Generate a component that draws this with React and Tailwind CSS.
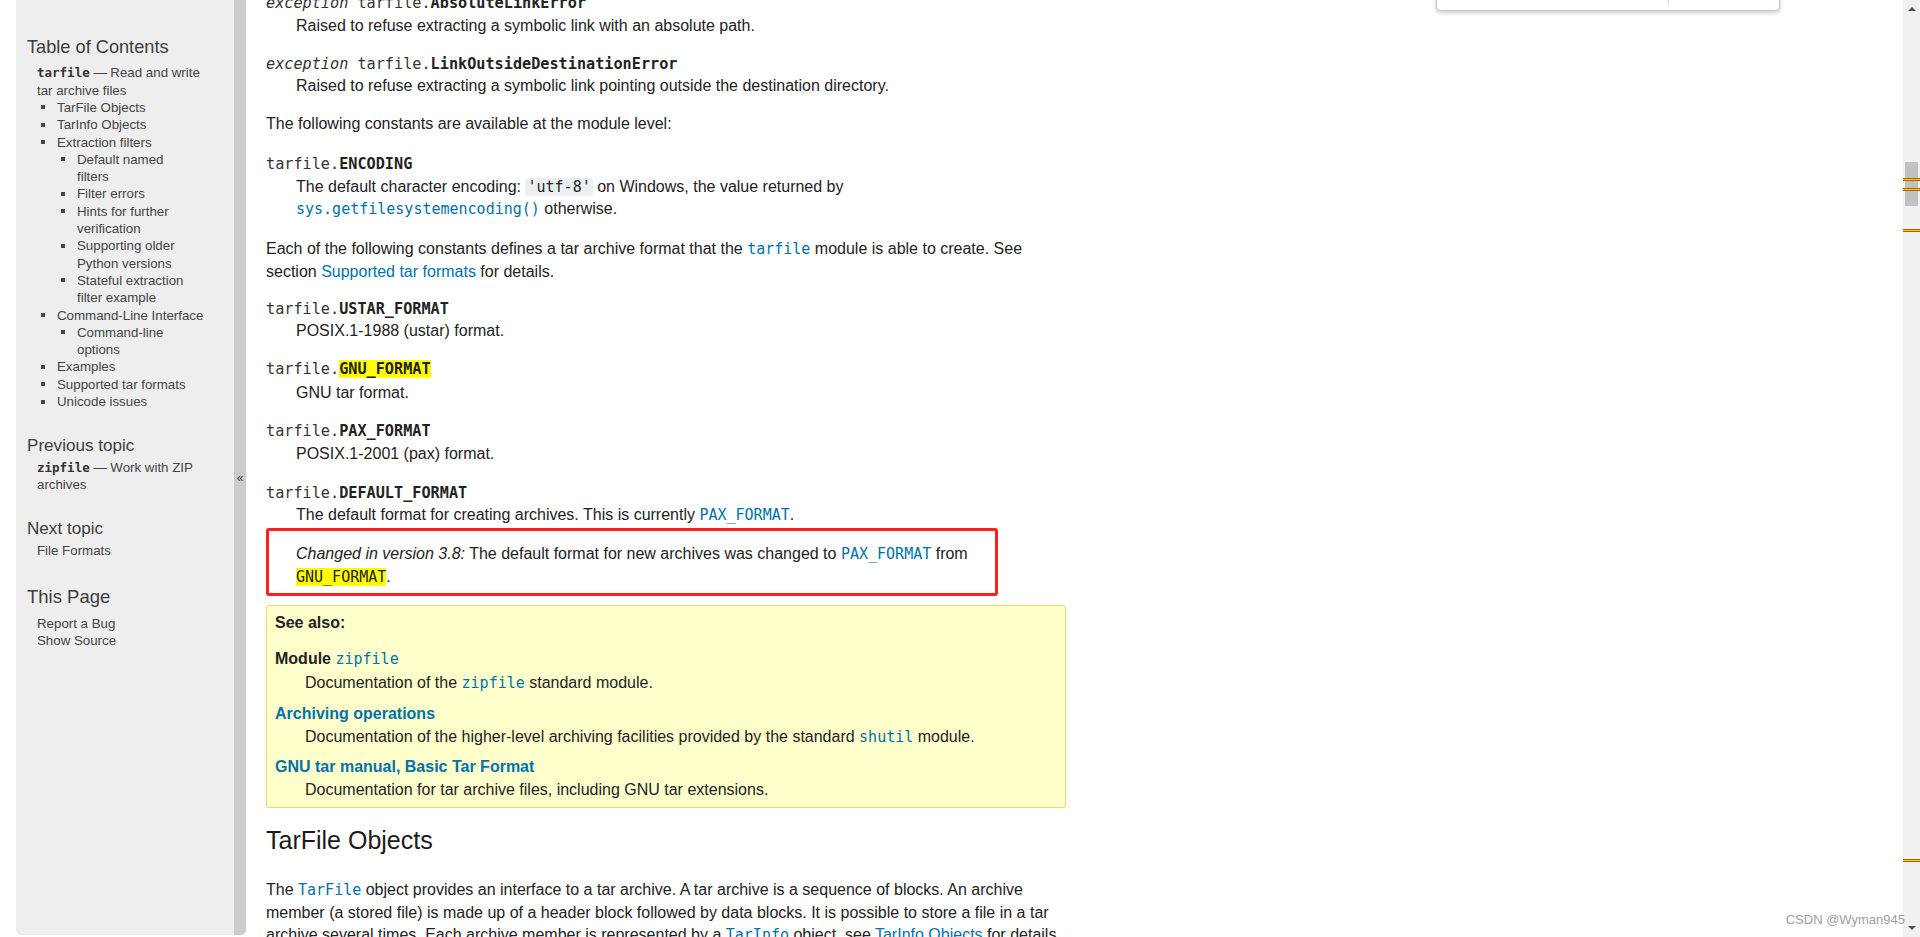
const mono = "font-['DejaVu_Sans_Mono',monospace]";

function Code({ children, link, hl, bg }) {
  return (
    <code
      className={`${mono} text-[15px] ${link ? "text-[#0072aa]" : "text-[#222]"} ${
        hl ? "bg-[#ffff00] text-[#222]" : ""
      } ${bg ? "bg-[#ecf0f3] rounded-[3px] px-[2px]" : ""}`}
    >
      {children}
    </code>
  );
}

function Sig({ exc, name, hl, className = "" }) {
  return (
    <div className={`${mono} text-[15.2px] leading-[22.5px] ${className}`}>
      {exc && <em className="text-[#333]">exception </em>}
      <span className="text-[#333]">tarfile.</span>
      <span className={`font-bold text-[#222] ${hl ? "bg-[#ffff00]" : ""}`}>{name}</span>
    </div>
  );
}

function Dd({ children, className = "" }) {
  return <div className={`pl-[30px] ${className}`}>{children}</div>;
}

function Bullet({ children, sub }) {
  return (
    <li className="flex">
      <span className="w-[20px] shrink-0">
        <span className="block mt-[6.5px] ml-[4px] w-[4px] h-[4px] bg-[#444]" />
      </span>
      <div className="min-w-0">
        <div>{children}</div>
        {sub && <ul>{sub}</ul>}
      </div>
    </li>
  );
}

function Sidebar() {
  return (
    <div className="w-[218px] h-[935px] bg-[#eeeeee] rounded-bl-[5px] pl-[11px] pr-[6px] pt-[35px] text-[#444] text-[13.3px] leading-[17.3px]">
      <h3 className="text-[18.2px] leading-[24px] text-[#3d3d3d]">Table of Contents</h3>
      <div className="pl-[10px] mt-[5.4px]">
        <div>
          <code className={`${mono} font-bold text-[12.5px] text-[#333]`}>tarfile</code> — Read and write
          <br />
          tar archive files
        </div>
        <ul>
          <Bullet>TarFile Objects</Bullet>
          <Bullet>TarInfo Objects</Bullet>
          <Bullet
            sub={
              <>
                <Bullet>
                  Default named
                  <br />
                  filters
                </Bullet>
                <Bullet>Filter errors</Bullet>
                <Bullet>
                  Hints for further
                  <br />
                  verification
                </Bullet>
                <Bullet>
                  Supporting older
                  <br />
                  Python versions
                </Bullet>
                <Bullet>
                  Stateful extraction
                  <br />
                  filter example
                </Bullet>
              </>
            }
          >
            Extraction filters
          </Bullet>
          <Bullet
            sub={
              <Bullet>
                Command-line
                <br />
                options
              </Bullet>
            }
          >
            <span className="whitespace-nowrap">Command-Line Interface</span>
          </Bullet>
          <Bullet>Examples</Bullet>
          <Bullet>Supported tar formats</Bullet>
          <Bullet>Unicode issues</Bullet>
        </ul>
      </div>

      <h4 className="mt-[24.3px] text-[17.1px] leading-[22px] text-[#3d3d3d]">Previous topic</h4>
      <div className="pl-[10px] mt-[2.3px]">
        <code className={`${mono} font-bold text-[12.5px] text-[#333]`}>zipfile</code> — Work with ZIP
        <br />
        archives
      </div>

      <h4 className="mt-[24.3px] text-[17.1px] leading-[22px] text-[#3d3d3d]">Next topic</h4>
      <div className="pl-[10px] mt-[2.3px]">File Formats</div>

      <h3 className="mt-[25.3px] text-[18.5px] leading-[24px] text-[#3d3d3d]">This Page</h3>
      <ul className="pl-[10px] mt-[6.3px]">
        <li>Report a Bug</li>
        <li>Show Source</li>
      </ul>
    </div>
  );
}

function Collapse() {
  return (
    <div className="w-[12px] h-[935px] bg-[#cccccc] rounded-br-[5px] pt-[469px] text-center text-[12px] leading-[18px] text-[#444]">
      «
    </div>
  );
}

function Main() {
  return (
    <div className="w-[820px] pl-[20px] text-[16px] leading-[22.5px] text-[#222]">
      <div className="-mt-[8px]">
        <Sig exc name="AbsoluteLinkError" />
        <Dd>Raised to refuse extracting a symbolic link with an absolute path.</Dd>

        <Sig exc name="LinkOutsideDestinationError" className="mt-[15.5px]" />
        <Dd>Raised to refuse extracting a symbolic link pointing outside the destination directory.</Dd>

        <p className="mt-[15.5px]">The following constants are available at the module level:</p>

        <Sig name="ENCODING" className="mt-[17.5px]" />
        <Dd>
          The default character encoding: <Code bg>'utf-8'</Code> on Windows, the value returned by{" "}
          <Code link>sys.getfilesystemencoding()</Code> otherwise.
        </Dd>

        <p className="mt-[17.5px]">
          Each of the following constants defines a tar archive format that the <Code link>tarfile</Code> module is
          able to create. See section <a className="text-[#0072aa]">Supported tar formats</a> for details.
        </p>

        <Sig name="USTAR_FORMAT" className="mt-[14.5px]" />
        <Dd>POSIX.1-1988 (ustar) format.</Dd>

        <Sig name="GNU_FORMAT" hl className="mt-[15.5px]" />
        <Dd className="mt-[1px]">GNU tar format.</Dd>

        <Sig name="PAX_FORMAT" className="mt-[16px]" />
        <Dd>POSIX.1-2001 (pax) format.</Dd>

        <Sig name="DEFAULT_FORMAT" className="mt-[16.5px]" />
        <Dd>
          The default format for creating archives. This is currently <Code link>PAX_FORMAT</Code>.
        </Dd>

        <div className="mt-[1px] w-[732px] border-[3px] border-[#ff2119] rounded-[3px] pl-[27px] pt-[12.5px] pb-[4.5px]">
          <em>Changed in version 3.8:</em> The default format for new archives was changed to{" "}
          <Code link>PAX_FORMAT</Code> from <Code hl>GNU_FORMAT</Code>.
        </div>

        <div className="mt-[9px] w-[800px] bg-[#ffffcc] border border-[#e0dc6e] rounded-[3px] pl-[8px] pt-[5.5px] pb-[5.5px] leading-[23px]">
          <p className="font-bold">See also:</p>
          <div className="mt-[13px]">
            <span className="font-bold">Module</span> <Code link>zipfile</Code>
          </div>
          <Dd>
            Documentation of the <Code link>zipfile</Code> standard module.
          </Dd>
          <div className="mt-[6.5px] font-bold text-[#0072aa]">Archiving operations</div>
          <Dd>
            Documentation of the higher-level archiving facilities provided by the standard <Code link>shutil</Code>{" "}
            module.
          </Dd>
          <div className="mt-[6.5px] font-bold text-[#0072aa]">GNU tar manual, Basic Tar Format</div>
          <Dd>Documentation for tar archive files, including GNU tar extensions.</Dd>
        </div>

        <h2 className="mt-[17px] text-[25px] leading-[30px] text-[#1a1a1a]">TarFile Objects</h2>

        <p className="mt-[24.5px]">
          The <Code link>TarFile</Code> object provides an interface to a tar archive. A tar archive is a sequence of
          blocks. An archive member (a stored file) is made up of a header block followed by data blocks. It is
          possible to store a file in a tar archive several times. Each archive member is represented by a{" "}
          <Code link>TarInfo</Code> object, see <a className="text-[#0072aa]">TarInfo Objects</a> for details.
        </p>
      </div>
    </div>
  );
}

function Marker({ top }) {
  return (
    <div
      className="absolute left-0 w-full h-[3px] bg-[#ffd400] border-y border-[#b05a00]"
      style={{ top }}
    />
  );
}

function Scrollbar() {
  return (
    <div className="relative w-[17px] h-[937px] shrink-0 bg-[#f1f1f1]">
      <div className="absolute top-[7px] left-[5px] w-0 h-0 border-x-[4px] border-x-transparent border-b-[4px] border-b-[#505050]" />
      <div className="absolute top-[162px] left-[2px] w-[13px] h-[44px] bg-[#c1c1c1]" />
      <Marker top={178} />
      <Marker top={188} />
      <Marker top={229} />
      <Marker top={859} />
      <div className="absolute bottom-[7px] left-[5px] w-0 h-0 border-x-[4px] border-x-transparent border-t-[4px] border-t-[#505050]" />
    </div>
  );
}

export default function App() {
  return (
    <div className="relative flex h-[937px] w-[1920px] overflow-hidden bg-white font-['Liberation_Sans',Arial,sans-serif]">
      <div className="flex flex-1 min-w-0 pl-[16px]">
        <Sidebar />
        <Collapse />
        <Main />
      </div>
      <Scrollbar />

      {/* popup cut off at top */}
      <div className="absolute left-[1436px] top-[-30px] w-[344px] h-[41px] bg-white border border-[#c4c4c4] rounded-[4px] shadow-[0_2px_4px_rgba(0,0,0,0.2)]">
        <div className="absolute left-[231px] top-0 h-[33px] w-px bg-[#d4d4d4]" />
      </div>

      <div className="absolute right-[15px] bottom-[9px] text-[13px] leading-[16px] text-[#a0a0a0]">CSDN @Wyman945</div>
    </div>
  );
}
